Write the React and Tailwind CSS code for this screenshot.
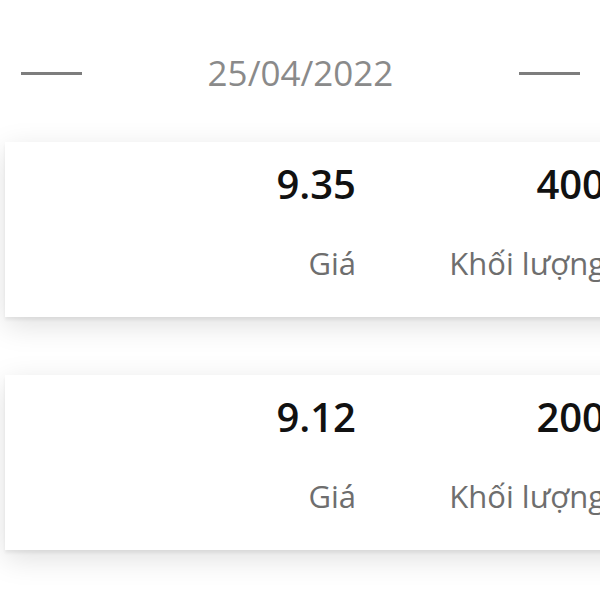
export default function App() {
  const rows = [
    { price: "9.35", vol: "400" },
    { price: "9.12", vol: "200" },
  ];
  return (
    <div
      className="w-[600px] h-[600px] overflow-hidden bg-white"
      style={{ fontFamily: '"Open Sans", "Noto Sans", sans-serif' }}
    >
      <div className="flex items-center justify-between pl-[21px] pr-[20px] pt-[48px] h-[98px]">
        <div className="w-[61px] h-[3px] bg-[#7d7d7d]" />
        <div className="text-[35px] leading-[50px] text-[#8a8a8a]">25/04/2022</div>
        <div className="w-[61px] h-[3px] bg-[#7d7d7d]" />
      </div>
      <div className="flex flex-col gap-[58px] pt-[44px] pl-[5px]">
        {rows.map((r, i) => (
          <div
            key={i}
            className="w-[700px] h-[175px] bg-white shadow-[0_3px_3px_rgba(0,0,0,0.06),0_8px_28px_rgba(0,0,0,0.13)] grid grid-cols-[351px_249px_1fr]"
          >
            <div className="flex flex-col items-end pt-[21px]">
              <div className="text-[40px] leading-[42px] font-semibold text-[#111]">{r.price}</div>
              <div className="mt-[42px] text-[31px] leading-[33px] text-[#6e6e6e]">Giá</div>
            </div>
            <div className="flex flex-col items-end pt-[21px]">
              <div className="text-[40px] leading-[42px] font-semibold text-[#111]">{r.vol}</div>
              <div className="mt-[42px] text-[31px] leading-[33px] text-[#6e6e6e] whitespace-nowrap">Khối lượng</div>
            </div>
            <div />
          </div>
        ))}
      </div>
    </div>
  );
}
